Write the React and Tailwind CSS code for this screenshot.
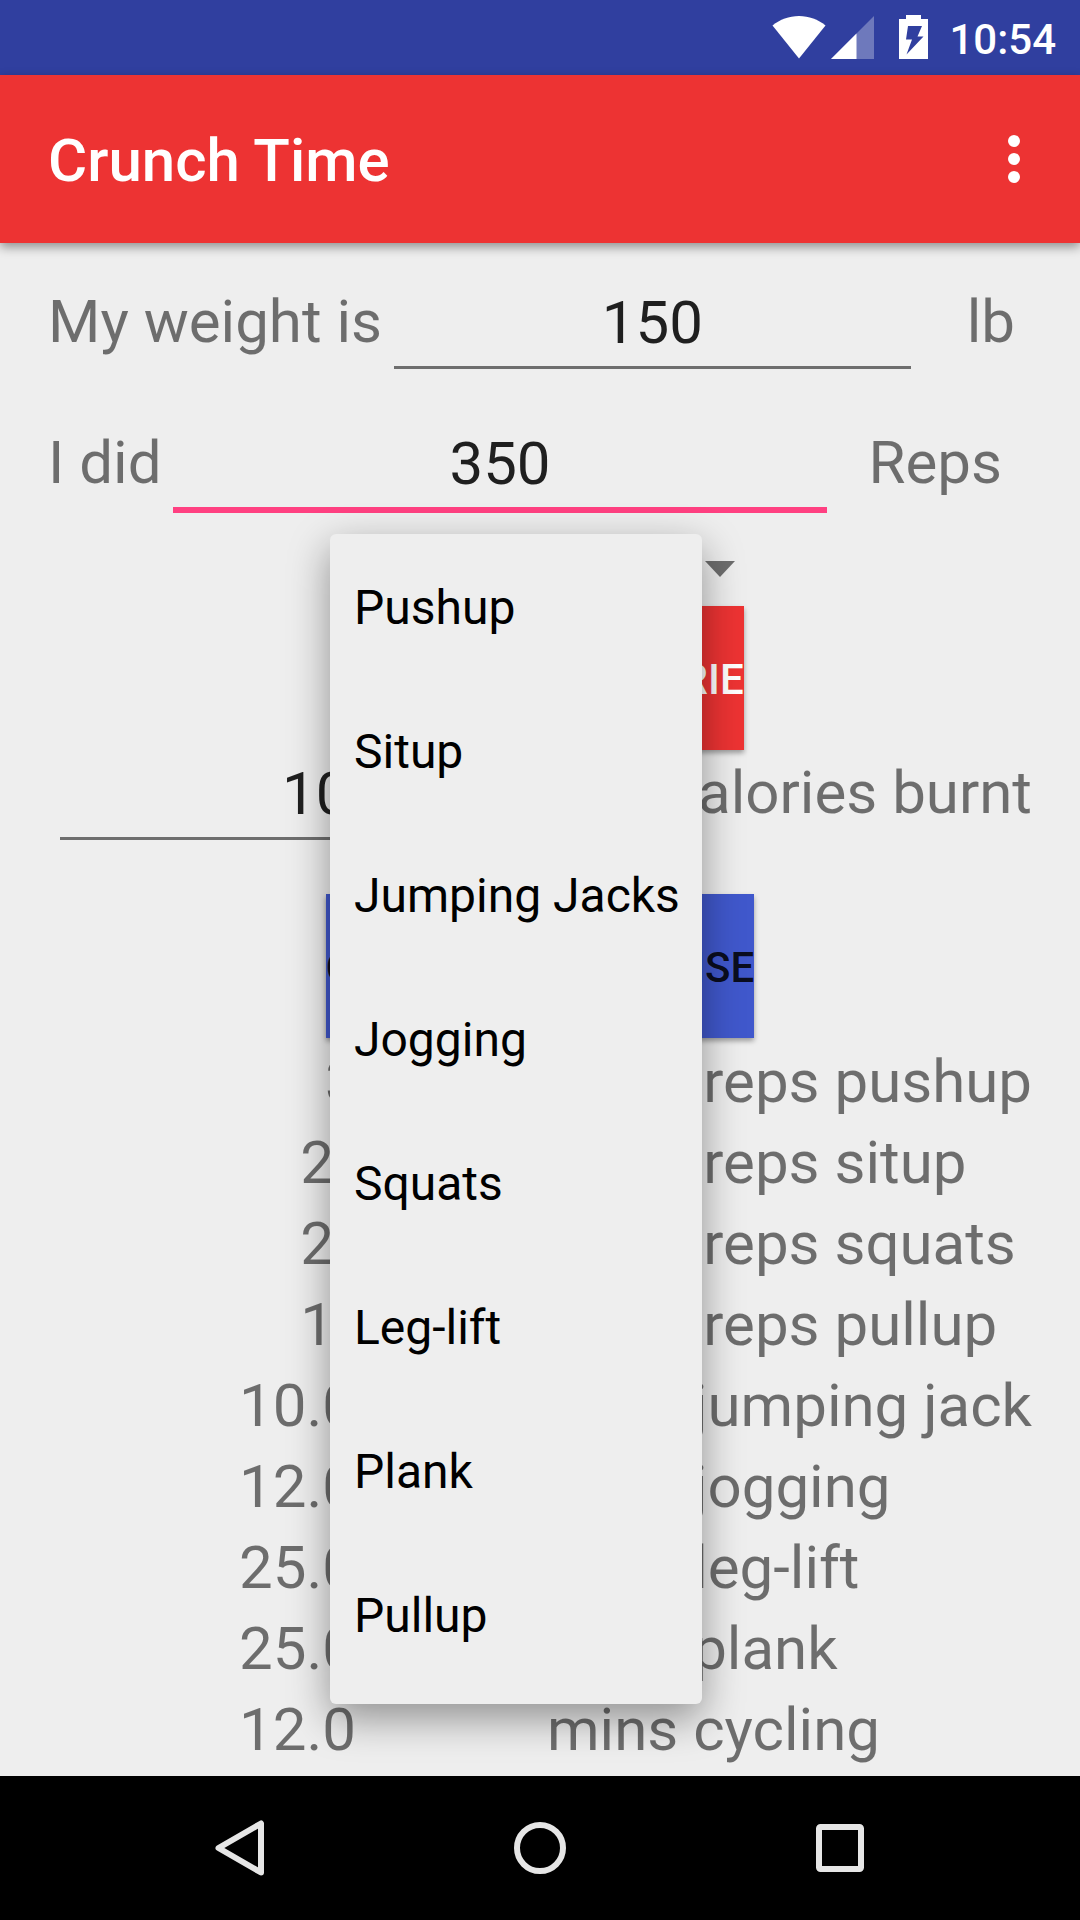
import React from "react";

const EXERCISES = [
  "Pushup",
  "Situp",
  "Jumping Jacks",
  "Jogging",
  "Squats",
  "Leg-lift",
  "Plank",
  "Pullup",
];

const REP_ROWS = [
  ["350", "reps pushup"],
  ["200.0", "reps situp"],
  ["225.0", "reps squats"],
  ["100.0", "reps pullup"],
];

const MINUTE_ROWS = [
  ["10.0", "mins jumping jack"],
  ["12.0", "mins jogging"],
  ["25.0", "mins leg-lift"],
  ["25.0", "mins plank"],
  ["12.0", "mins cycling"],
];

function StatusBar() {
  return (
    <div className="flex h-[75px] items-start justify-end bg-[#303f9f] pr-6 text-white">
      <svg width="54" height="43" viewBox="0 0 54 43" fill="currentColor" className="mt-4" aria-hidden="true">
        <path d="M0.5 9.5C8 3.5 17 0 27 0s19 3.500 26.500 9.500L27 42.500Z" />
      </svg>
      <svg width="43" height="43" viewBox="0 0 43 43" fill="currentColor" className="mt-4 ml-[5px]" aria-hidden="true">
        <path d="M43 0v43H0Z" opacity="0.3" />
        <path d="M25.500 17.500V43H0Z" />
      </svg>
      <svg width="29" height="44" viewBox="0 0 29 44" className="mt-[15px] ml-[25px]" aria-hidden="true">
        <path d="M7 0h15v4h7v40H0V4h7Z" fill="currentColor" />
        <path d="M9 11h14l-4.500 10.500H24.500L7.500 39.500 13 24.500H7Z" fill="#303f9f" />
      </svg>
      <span className="ml-[21px] text-[42px] leading-[80px] font-medium">10:54</span>
    </div>
  );
}

function AppBar() {
  return (
    <header className="relative flex h-[168px] items-center justify-between bg-[#ed3333] pr-6 pl-12 text-white shadow-[0_4px_10px_rgba(0,0,0,0.4)]">
      <h1 className="pt-1 text-[60px] leading-[72px] font-medium">Crunch Time</h1>
      <button type="button" aria-label="More options" className="flex h-24 w-[84px] items-center justify-center">
        <svg width="12" height="48" viewBox="0 0 12 48" fill="currentColor" aria-hidden="true">
          <circle cx="6" cy="6" r="6" />
          <circle cx="6" cy="24" r="6" />
          <circle cx="6" cy="42" r="6" />
        </svg>
      </button>
    </header>
  );
}

function ResultTable({ rows, label }) {
  return (
    <table className="w-full text-[60px] leading-[81px] text-black/54" aria-label={label}>
      <tbody>
        {rows.map(([amount, name]) => (
          <tr key={name}>
            <td className="w-full p-0 text-center">{amount}</td>
            <td className="p-0 text-left whitespace-nowrap">{name}</td>
          </tr>
        ))}
      </tbody>
    </table>
  );
}

function ExercisePicker() {
  return (
    <div className="relative mx-auto mt-[21px] flex h-[72px] w-[432px] items-center">
      <select
        aria-label="Exercise"
        defaultValue="Pushup"
        className="h-full w-full appearance-none bg-transparent pl-6 text-[48px] leading-[60px] text-black"
      >
        {EXERCISES.map((name) => (
          <option key={name}>{name}</option>
        ))}
      </select>
      <svg
        width="30"
        height="16"
        viewBox="0 0 30 16"
        className="pointer-events-none absolute top-[27px] right-[21px] text-black/54"
        fill="currentColor"
        aria-hidden="true"
      >
        <path d="M0 0h30L15 16Z" />
      </svg>
      <ul
        role="listbox"
        aria-label="Exercises"
        className="absolute top-0 left-[6px] z-10 w-[372px] rounded-[6px] bg-[#eeeeee] pb-[18px] shadow-[0_14px_40px_rgba(0,0,0,0.4)]"
      >
        {EXERCISES.map((name) => (
          <li key={name} role="option" aria-selected={name === "Pushup"}>
            <button
              type="button"
              className="flex h-36 w-full items-center px-6 pt-1 text-[48px] leading-[60px] whitespace-nowrap text-black"
            >
              {name}
            </button>
          </li>
        ))}
      </ul>
    </div>
  );
}

const fieldClass =
  "mx-3 min-w-0 flex-1 bg-transparent p-0 pb-2 text-center text-[60px] leading-[72px] text-black/87 outline-none";

const actionClass =
  "mx-auto block h-36 pt-1 text-[42px] leading-[48px] font-medium shadow-[0_3px_5px_rgba(0,0,0,0.35)]";

export default function App() {
  return (
    <div className="flex min-h-screen flex-col bg-[#eeeeee] font-['Roboto',sans-serif]">
      <StatusBar />
      <AppBar />

      <main className="flex-1 px-12 pt-[43px] text-[60px] leading-[72px] text-black/54">
        <div className="flex items-start">
          <label htmlFor="weight">My weight is</label>
          <input id="weight" type="text" defaultValue="150" className={`${fieldClass} h-[83px] border-b-3 border-[#6e6e6e]`} />
          <span className="pr-[17px] pl-11">lb</span>
        </div>

        <div className="mt-[58px] flex items-start">
          <label htmlFor="count">I did</label>
          <input id="count" type="text" defaultValue="350" className={`${fieldClass} h-[86px] border-b-6 border-[#ff4081]`} />
          <span className="px-[30px]">Reps</span>
        </div>

        <ExercisePicker />

        <button type="button" className={`${actionClass} bg-[#ed3333] text-white`}>
          CALCULATE CALORIE
        </button>

        <div className="mt-[7px] flex items-start">
          <input id="calories" type="text" defaultValue="100.0" className={`${fieldClass} h-[83px] border-b-3 border-[#6e6e6e]`} />
          <label htmlFor="calories">calories burnt</label>
        </div>

        <button type="button" className={`${actionClass} mt-[54px] mb-[3px] bg-[#4058cc] text-black/87`}>
          CALCULATE EXERCISE
        </button>

        <ResultTable rows={REP_ROWS} label="Equivalent repetitions" />
        <ResultTable rows={MINUTE_ROWS} label="Equivalent minutes" />
      </main>

      <nav className="flex h-36 items-center bg-black px-[90px] text-[#e6e6e6]">
        <button type="button" aria-label="Back" className="flex flex-1 items-center justify-center">
          <svg width="50" height="56" viewBox="0 0 50 56" fill="none" stroke="currentColor" strokeWidth="6" strokeLinejoin="round" aria-hidden="true">
            <path d="M46 3.500V52.500L3.500 28Z" />
          </svg>
        </button>
        <button type="button" aria-label="Home" className="flex flex-1 items-center justify-center">
          <svg width="52" height="52" viewBox="0 0 52 52" fill="none" stroke="currentColor" strokeWidth="6" aria-hidden="true">
            <circle cx="26" cy="26" r="23" />
          </svg>
        </button>
        <button type="button" aria-label="Recent apps" className="flex flex-1 items-center justify-center">
          <svg width="48" height="48" viewBox="0 0 48 48" fill="none" stroke="currentColor" strokeWidth="6" aria-hidden="true">
            <rect x="3" y="3" width="42" height="42" rx="1.500" />
          </svg>
        </button>
      </nav>
    </div>
  );
}
